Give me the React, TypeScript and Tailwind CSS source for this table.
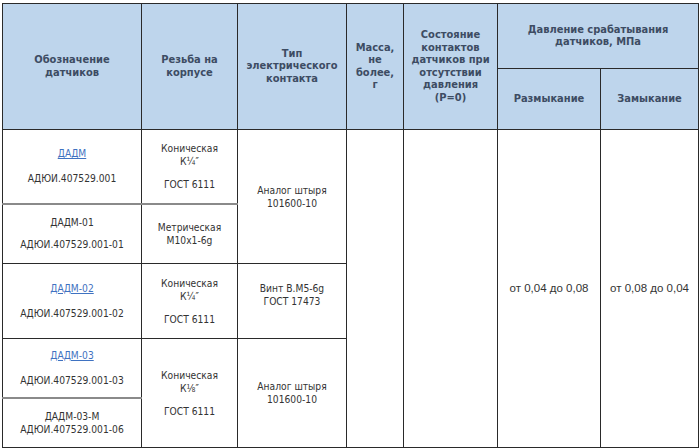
const head = "bg-[#bed5ec] text-[#3d4c63] font-bold text-[11px] leading-[12.5px] text-center align-middle border border-[#2a2a2a] px-[4px]";
const cell = "border border-[#2a2a2a] text-center align-middle px-[4px] text-[#333] text-[10.2px] leading-[13px]";
const num = "border border-[#2a2a2a] text-center align-middle px-[4px] text-[#333] text-[11.5px] leading-[13px]";

const Link = ({ children }: { children: string }) => (
  <a href="#" className="text-[#3f72c1] underline">
    {children}
  </a>
);

export default function App() {
  return (
    <div
      className="w-[700px] h-[448px] bg-white pt-[3px] pl-[2px] overflow-hidden"
      style={{ fontFamily: '"DejaVu Sans Condensed", "DejaVu Sans", sans-serif' }}
    >
      <table className="table-fixed border-collapse w-[696px]">
        <colgroup>
          <col className="w-[139px]" />
          <col className="w-[96px]" />
          <col className="w-[109px]" />
          <col className="w-[57px]" />
          <col className="w-[94px]" />
          <col className="w-[103px]" />
          <col className="w-[98px]" />
        </colgroup>
        <thead>
          <tr className="h-[65px]">
            <th rowSpan={2} className={head}>
              Обозначение
              <br />
              датчиков
            </th>
            <th rowSpan={2} className={head}>
              Резьба на корпусе
            </th>
            <th rowSpan={2} className={head}>
              Тип электрического контакта
            </th>
            <th rowSpan={2} className={head}>
              Масса,
              <br />
              не
              <br />
              более,
              <br />г
            </th>
            <th rowSpan={2} className={head}>
              Состояние контактов датчиков при отсутствии давления (P=0)
            </th>
            <th colSpan={2} className={head}>
              Давление срабатывания
              <br />
              датчиков, МПа
            </th>
          </tr>
          <tr className="h-[61px]">
            <th className={head}>Размыкание</th>
            <th className={head}>Замыкание</th>
          </tr>
        </thead>
        <tbody>
          <tr className="h-[74px]">
            <td className={cell}>
              <p className="mb-[12px]">
                <Link>ДАДМ</Link>
              </p>
              <p>АДЮИ.407529.001</p>
            </td>
            <td className={cell}>
              <p className="mb-[10px]">
                Коническая
                <br />
                К¼″
              </p>
              <p>ГОСТ 6111</p>
            </td>
            <td rowSpan={2} className={cell}>
              Аналог штыря
              <br />
              101600-10
            </td>
            <td rowSpan={5} className={cell}></td>
            <td rowSpan={5} className={cell}></td>
            <td
              rowSpan={5}
              className={num}
              style={{ fontFamily: '"Liberation Sans", Arial, sans-serif' }}
            >
              от 0,04 до 0,08
            </td>
            <td
              rowSpan={5}
              className={num}
              style={{ fontFamily: '"Liberation Sans", Arial, sans-serif' }}
            >
              от 0,08 до 0,04
            </td>
          </tr>
          <tr className="h-[60px]">
            <td className={cell + " border-t-[#8a8a8a] border-t-2"}>
              <p className="mb-[9px]">ДАДМ-01</p>
              <p>АДЮИ.407529.001-01</p>
            </td>
            <td className={cell + " border-t-[#8a8a8a] border-t-2"}>
              Метрическая
              <br />
              M10x1-6g
            </td>
          </tr>
          <tr className="h-[75px]">
            <td className={cell}>
              <p className="mb-[12px]">
                <Link>ДАДМ-02</Link>
              </p>
              <p>АДЮИ.407529.001-02</p>
            </td>
            <td className={cell}>
              <p className="mb-[10px]">
                Коническая
                <br />
                К¼″
              </p>
              <p>ГОСТ 6111</p>
            </td>
            <td className={cell + " pb-[12px]"}>
              Винт В.М5-6g
              <br />
              ГОСТ 17473
            </td>
          </tr>
          <tr className="h-[59px]">
            <td className={cell}>
              <p className="mb-[12px]">
                <Link>ДАДМ-03</Link>
              </p>
              <p>АДЮИ.407529.001-03</p>
            </td>
            <td rowSpan={2} className={cell}>
              <p className="mb-[10px]">
                Коническая
                <br />
                К⅛″
              </p>
              <p>ГОСТ 6111</p>
            </td>
            <td rowSpan={2} className={cell}>
              Аналог штыря
              <br />
              101600-10
            </td>
          </tr>
          <tr className="h-[50px]">
            <td className={cell + " border-t-[#8a8a8a] border-t-2"}>
              ДАДМ-03-М
              <br />
              АДЮИ.407529.001-06
            </td>
          </tr>
        </tbody>
      </table>
    </div>
  );
}
